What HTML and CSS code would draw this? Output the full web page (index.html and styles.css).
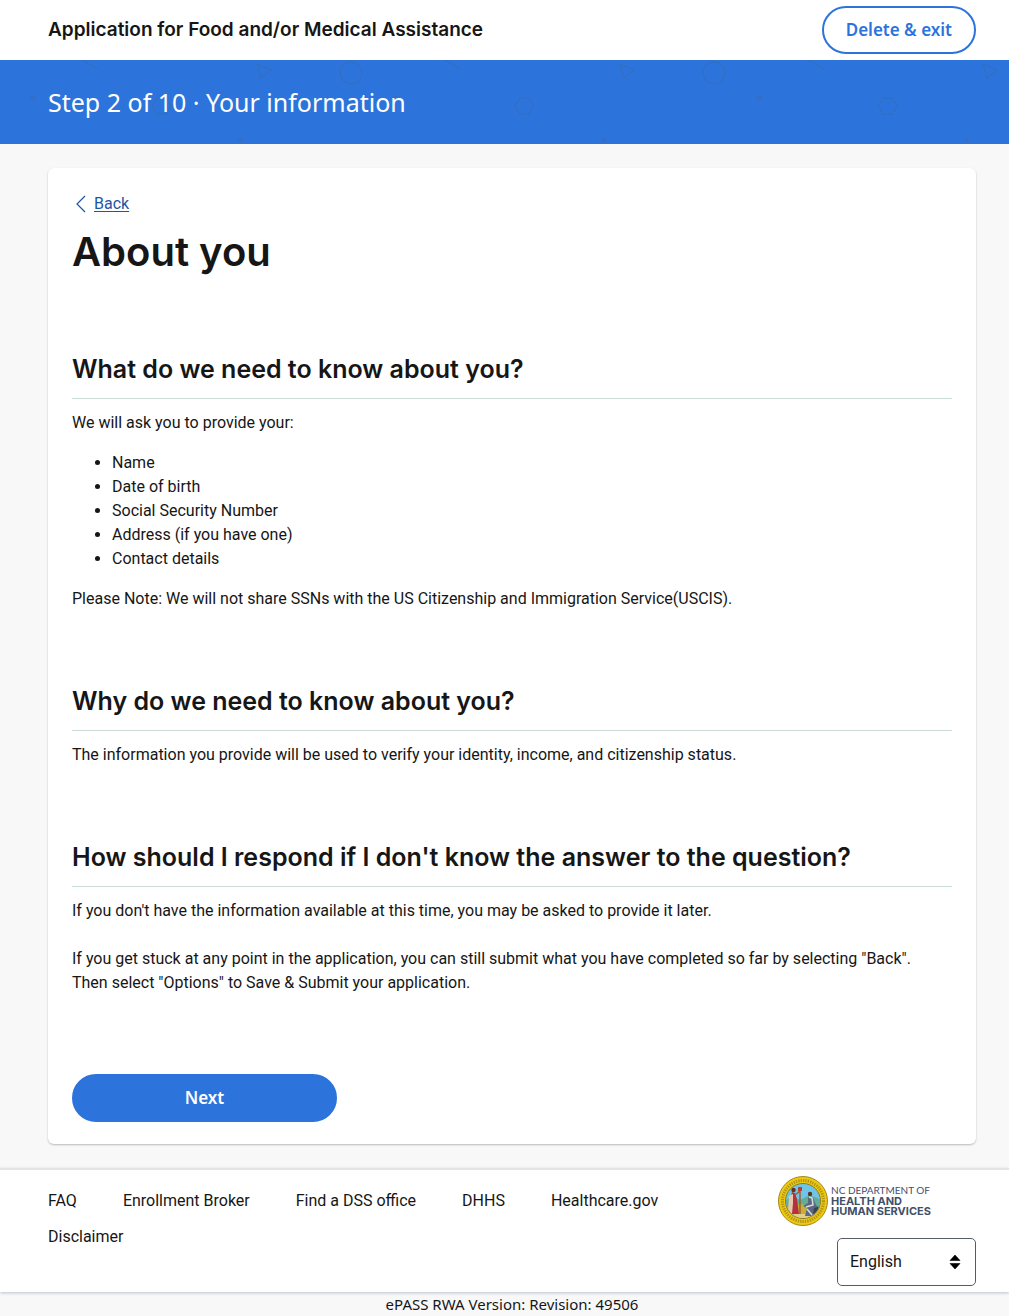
FILE: index.html
```html
<!DOCTYPE html>
<html lang="en">
<head>
<meta charset="utf-8">
<meta name="viewport" content="width=device-width, initial-scale=1">
<title>Application for Food and/or Medical Assistance</title>
<link rel="stylesheet" href="styles.css">
</head>
<body>
<header class="topbar">
  <div class="app-title">Application for Food and/or Medical Assistance</div>
  <button class="btn btn-outline" type="button">Delete &amp; exit</button>
</header>
<div class="banner">Step 2 of 10 · Your information</div>
<main class="main">
  <div class="card">
    <a class="back" href="#">
      <svg class="back-icon" viewBox="0 0 18 18" aria-hidden="true"><path d="M13 1 5 9l8 8" fill="none" stroke="currentColor" stroke-width="1.2"/></svg>
      <span class="back-text">Back</span>
    </a>
    <h1 class="title">About you</h1>
    <section class="section">
      <h2 class="section-title">What do we need to know about you?</h2>
      <p class="text">We will ask you to provide your:</p>
      <ul class="list">
        <li>Name</li>
        <li>Date of birth</li>
        <li>Social Security Number</li>
        <li>Address (if you have one)</li>
        <li>Contact details</li>
      </ul>
      <p class="text">Please Note: We will not share SSNs with the US Citizenship and Immigration Service(USCIS).</p>
    </section>
    <section class="section">
      <h2 class="section-title">Why do we need to know about you?</h2>
      <p class="text">The information you provide will be used to verify your identity, income, and citizenship status.</p>
    </section>
    <section class="section">
      <h2 class="section-title">How should I respond if I don't know the answer to the question?</h2>
      <p class="text">If you don't have the information available at this time, you may be asked to provide it later.</p>
      <p class="text text-spaced">If you get stuck at any point in the application, you can still submit what you have completed so far by selecting "Back". Then select "Options" to Save &amp; Submit your application.</p>
    </section>
    <button class="btn btn-primary" type="button">Next</button>
  </div>
</main>
<footer class="footer">
  <nav class="links" aria-label="Footer">
    <a href="#">FAQ</a>
    <a href="#">Enrollment Broker</a>
    <a href="#">Find a DSS office</a>
    <a href="#">DHHS</a>
    <a href="#">Healthcare.gov</a>
    <a href="#">Disclaimer</a>
  </nav>
  <div class="footer-side">
    <div class="logo">
      <svg class="seal" viewBox="0 0 50 50" aria-hidden="true">
        <defs><clipPath id="scene"><circle cx="25" cy="25" r="17"/></clipPath></defs>
        <circle cx="25" cy="25" r="24.5" fill="#edc80e" stroke="#a58a1c"/>
        <circle cx="25" cy="25" r="20.5" fill="none" stroke="#6f6122" stroke-width="3" stroke-dasharray="1.3 1.1" opacity=".5"/>
        <circle cx="25" cy="25" r="17.5" fill="#6fc5e8" stroke="#8c7a22"/>
        <g clip-path="url(#scene)">
          <path d="M7 25l7-5 8 4 10-5 12 5v22H7z" fill="#5fae9a"/>
          <path d="M7 31l15-3 22 4v12H7z" fill="#c5b13a"/>
          <path d="M12 38h28v6H12z" fill="#e3cf8c"/>
          <path d="M14 16l3 1 2 6 2 15H11l1-12z" fill="#b9303c"/>
          <path d="M11 20l4-2 0 9-1 11-4-1z" fill="#e2c9ad"/>
          <circle cx="15.5" cy="14" r="2.200" fill="#5b3524"/>
          <path d="M17 19l5-4M22 12v26" stroke="#9a5b2c" stroke-width="1.400"/>
          <path d="M20 11h4v4h-4z" fill="#c5392f"/>
          <path d="M30 21l5 1 3 7 5 4-2 7H27l2-8-4-2 5-3z" fill="#5c6881"/>
          <path d="M31 21l3 1 1 7-7 2M29 33l5 6" fill="none" stroke="#d8dce3" stroke-width="1.500"/>
          <circle cx="32" cy="18" r="2.200" fill="#5b3524"/>
          <path d="M36 32c5-2 8 1 7 6l-8 1z" fill="#364256"/>
        </g>
      </svg>
      <div class="logo-text">
        <span class="logo-light">NC DEPARTMENT OF</span>
        <span class="logo-bold">HEALTH AND</span>
        <span class="logo-bold">HUMAN SERVICES</span>
      </div>
    </div>
    <div class="select-wrap">
      <select class="select" aria-label="Language"><option>English</option><option>Español</option></select>
      <svg class="select-icon" viewBox="0 0 12 16" aria-hidden="true"><path d="M6 1l5 5.500H1zM6 15 1 9.500h10z" stroke="#000" stroke-linejoin="round" stroke-width=".6"/></svg>
    </div>
  </div>
</footer>
<div class="version">ePASS RWA Version: Revision: 49506</div>
</body>
</html>
```
FILE: styles.css
```css
* { box-sizing: border-box; }
body {
  margin: 0;
  background: #f8f8f8;
  color: #161616;
  font: 16px/24px Roboto, "Liberation Sans", sans-serif;
}
h1, h2, p, ul { margin: 0; }
.topbar {
  display: flex;
  align-items: center;
  justify-content: space-between;
  padding: 6px 33px 6px 48px;
  background: #fff;
}
.app-title { font: 600 19px/26px Inter, sans-serif; }
.btn {
  height: 48px;
  border-radius: 24px;
  border: 2px solid #2c74db;
  font: 600 17px/24px "Noto Sans", sans-serif;
}
.btn-outline { padding: 0 22px; background: #fff; color: #2c74db; }
.btn-primary { display: block; width: 265px; max-width: 100%; background: #2c74db; color: #fff; }
.banner {
  padding: 25px 48px;
  background: #2c74db url("data:image/svg+xml,%3Csvg xmlns='http://www.w3.org/2000/svg' width='363' height='84' fill='none' stroke='%23356cbd' stroke-opacity='.65' stroke-width='1.600'%3E%3Cpath d='M82 0l16 9M257 4l14 6-10 8zM157 38h9l5 8-5 8h-9l-5-8z'/%3E%3Ccircle cx='351' cy='13' r='11'/%3E%3Cg fill='%23356cbd' fill-opacity='.6' stroke='none'%3E%3Ccircle cx='33' cy='38' r='3'/%3E%3Ccircle cx='240.500' cy='80.500' r='2.500'/%3E%3C/g%3E%3C/svg%3E") repeat-x;
  color: #fff;
  font: 25px/34px "Noto Sans", sans-serif;
}
.main { padding: 24px 33px 24px 48px; }
.card {
  padding: 24px 24px 22px;
  background: #fff;
  border-radius: 6px;
  box-shadow: 0 1px 2px rgba(0, 0, 0, .25);
}
.back { display: flex; width: max-content; align-items: center; gap: 4px; color: #1f55a5; text-decoration: none; }
.back-icon { width: 18px; height: 18px; }
.back-text { text-decoration: underline; text-underline-offset: 2px; }
.title { margin: 8px 0 71px; font: 600 40px/56px Inter, sans-serif; }
.section { margin-bottom: 72px; }
.section-title {
  margin-bottom: 12px;
  padding-bottom: 10px;
  border-bottom: 1px solid #cbdad5;
  font: 600 25px/37px Inter, sans-serif;
}
.section:last-of-type { margin-bottom: 79px; }
.text { max-width: 860px; }
.list { margin: 16px 0; padding-left: 40px; }
.text-spaced { margin-top: 24px; }
.footer {
  display: flex;
  justify-content: space-between;
  padding: 6px 33px 6px 48px;
  background: #fff;
  border-top: 2px solid #e4e4e4;
  box-shadow: 0 1px 3px #b8c2d0;
}
.links { display: flex; flex: 1; flex-wrap: wrap; align-content: flex-start; gap: 12px 46px; padding: 13px 48px 0 0; }
.links a { color: #161616; text-decoration: none; }
.footer-side { display: flex; flex-direction: column; align-items: flex-end; gap: 12px; width: 198px; }
.logo { display: flex; align-self: flex-start; gap: 3px; }
.seal { width: 50px; height: 50px; }
.logo-text { display: flex; flex-direction: column; padding-top: 9px; color: #3f5069; white-space: nowrap; }
.logo-light { font: 10px/11px Lato, sans-serif; }
.logo-bold { font: 700 11px/10px Inter, sans-serif; }
.select-wrap { position: relative; width: 139px; }
.select {
  display: block;
  width: 100%;
  height: 48px;
  padding: 0 12px;
  appearance: none;
  background: #fff;
  border: 1px solid #565c65;
  border-radius: 5px;
  color: #161616;
  font: inherit;
}
.select-icon { position: absolute; top: 16px; right: 15px; width: 12px; height: 16px; pointer-events: none; }
.version { padding-left: 15px; text-align: center; font: 15px/24px "Noto Sans", sans-serif; }
```
